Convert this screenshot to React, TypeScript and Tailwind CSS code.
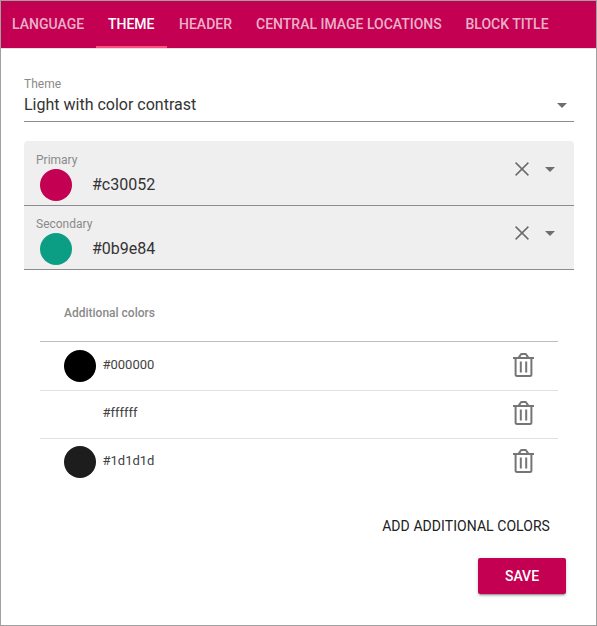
import React from "react";

const tabs = [
  { label: "LANGUAGE", width: "w-[95px]", pad: "pl-[11px]" },
  { label: "THEME", width: "w-[71px]", pad: "pl-3", active: true },
  { label: "HEADER", width: "w-[77px]", pad: "pl-3" },
  { label: "CENTRAL IMAGE LOCATIONS", width: "w-[209.5px]", pad: "pl-3" },
  { label: "BLOCK TITLE", width: "w-[107px]", pad: "pl-3" },
];

const palette = [
  { label: "Primary", value: "#c30052", swatch: "bg-[#c30052]" },
  { label: "Secondary", value: "#0b9e84", swatch: "bg-[#0b9e84]" },
];

const extras = [
  { value: "#000000", swatch: "bg-black", height: "h-[49px]" },
  { value: "#ffffff", swatch: "bg-white", height: "h-12" },
  { value: "#1d1d1d", swatch: "bg-[#1d1d1d]", height: "h-12" },
];

function Caret() {
  return (
    <svg width="10" height="5" viewBox="0 0 10 5" className="block shrink-0" fill="#6e6e6e">
      <path d="M0 0h10L5 5z" />
    </svg>
  );
}

function Cross() {
  return (
    <svg width="14" height="14" viewBox="0 0 14 14" className="block shrink-0" fill="none" stroke="#6b6b6b" strokeWidth="1.5">
      <path d="M.6.6l12.8 12.8M13.4.6L.6 13.4" />
    </svg>
  );
}

function Trash() {
  return (
    <svg width="21" height="24" viewBox="0 0 21 24" className="block shrink-0" fill="none" stroke="#757575" strokeWidth="2">
      <path d="M0 5h21" />
      <path d="M5.8 4.6L7.6 1.8Q8 1 9 1h3q1 0 1.4.8l1.8 2.8" />
      <path d="M2.6 5v16.5q0 1.5 1.5 1.5h12.8q1.5 0 1.5-1.5V5" />
      <path d="M7.8 8.5v11M13.2 8.5v11" />
    </svg>
  );
}

export default function App() {
  return (
    <div className="flex h-[626px] w-[597px] flex-col overflow-hidden border border-[#a0a0a0] bg-white font-[Roboto,sans-serif] text-[#212121]">
      <nav className="flex h-12 shrink-0 border-b border-[#e0e0e0] bg-[#c30052]">
        {tabs.map((t) => (
          <div
            key={t.label}
            className={`flex h-[47px] shrink-0 flex-col whitespace-nowrap text-sm leading-[46px] font-medium ${t.width} ${t.active ? "text-white" : "text-white/70"}`}
          >
            <span className={`h-[45px] ${t.pad}`}>{t.label}</span>
            {t.active && <span className="h-0.5 bg-[#ff4f7d]" />}
          </div>
        ))}
      </nav>

      <main className="flex flex-col pl-[23px] pr-[22px]">
        <div className="flex h-[73px] flex-col border-b border-[#8c8c8c] pt-[27px]">
          <span className="text-xs leading-4 text-[#8a8a8a]">Theme</span>
          <div className="flex items-center justify-between pt-px pr-[7px] text-base leading-6 text-[#333]">
            <span>Light with color contrast</span>
            <Caret />
          </div>
        </div>

        <div className="mt-[19px] flex flex-col overflow-hidden rounded-t bg-[#efefef]">
          {palette.map((c, i) => (
            <div key={c.label} className={`flex justify-between border-b border-[#8c8c8c] pl-3 pr-[19px] ${i === 0 ? "h-[65px] pt-[11px]" : "h-16 pt-[10px]"}`}>
              <div className="flex flex-col">
                <span className="text-xs leading-4 text-[#8a8a8a]">{c.label}</span>
                <div className="flex items-center gap-5 pl-1 text-base leading-none text-[#333]">
                  <span className={`mt-px size-8 rounded-full ${c.swatch}`} />
                  <span>{c.value}</span>
                </div>
              </div>
              <div className="flex h-[34px] items-center gap-4">
                <Cross />
                <Caret />
              </div>
            </div>
          ))}
        </div>

        <section className="ml-4 mr-4 flex flex-col">
          <div className="h-[72px] border-b border-[#bdbdbd] pl-6 pt-[35px] text-xs leading-4 font-medium text-[#8a8a8a]">
            Additional colors
          </div>
          {extras.map((c, i) => (
            <div
              key={c.value}
              className={`flex items-start justify-between pl-6 pr-6 ${c.height} ${i < 2 ? "border-b border-[#e0e0e0]" : ""} ${i === 0 ? "pt-2" : "pt-[7px]"}`}
            >
              <div className="flex gap-[6.5px]">
                <span className={`size-8 rounded-full ${c.swatch}`} />
                <span className="pt-[5px] text-[13px] leading-5 text-[#424242]">{c.value}</span>
              </div>
              <div className="pt-[3px]">
                <Trash />
              </div>
            </div>
          ))}
        </section>

        <div className="mt-[29px] flex flex-col items-end">
          <button className="mr-6 h-5 text-sm leading-5 tracking-[0.06px] text-[#212121]">ADD ADDITIONAL COLORS</button>
          <button className="mr-2 mt-[22px] h-9 w-[88px] rounded-[2px] bg-[#c30052] text-sm leading-9 font-medium text-white shadow-[0_3px_1px_-2px_rgba(0,0,0,.2),0_2px_2px_0_rgba(0,0,0,.14),0_1px_5px_0_rgba(0,0,0,.12)]">
            SAVE
          </button>
        </div>
      </main>
    </div>
  );
}
